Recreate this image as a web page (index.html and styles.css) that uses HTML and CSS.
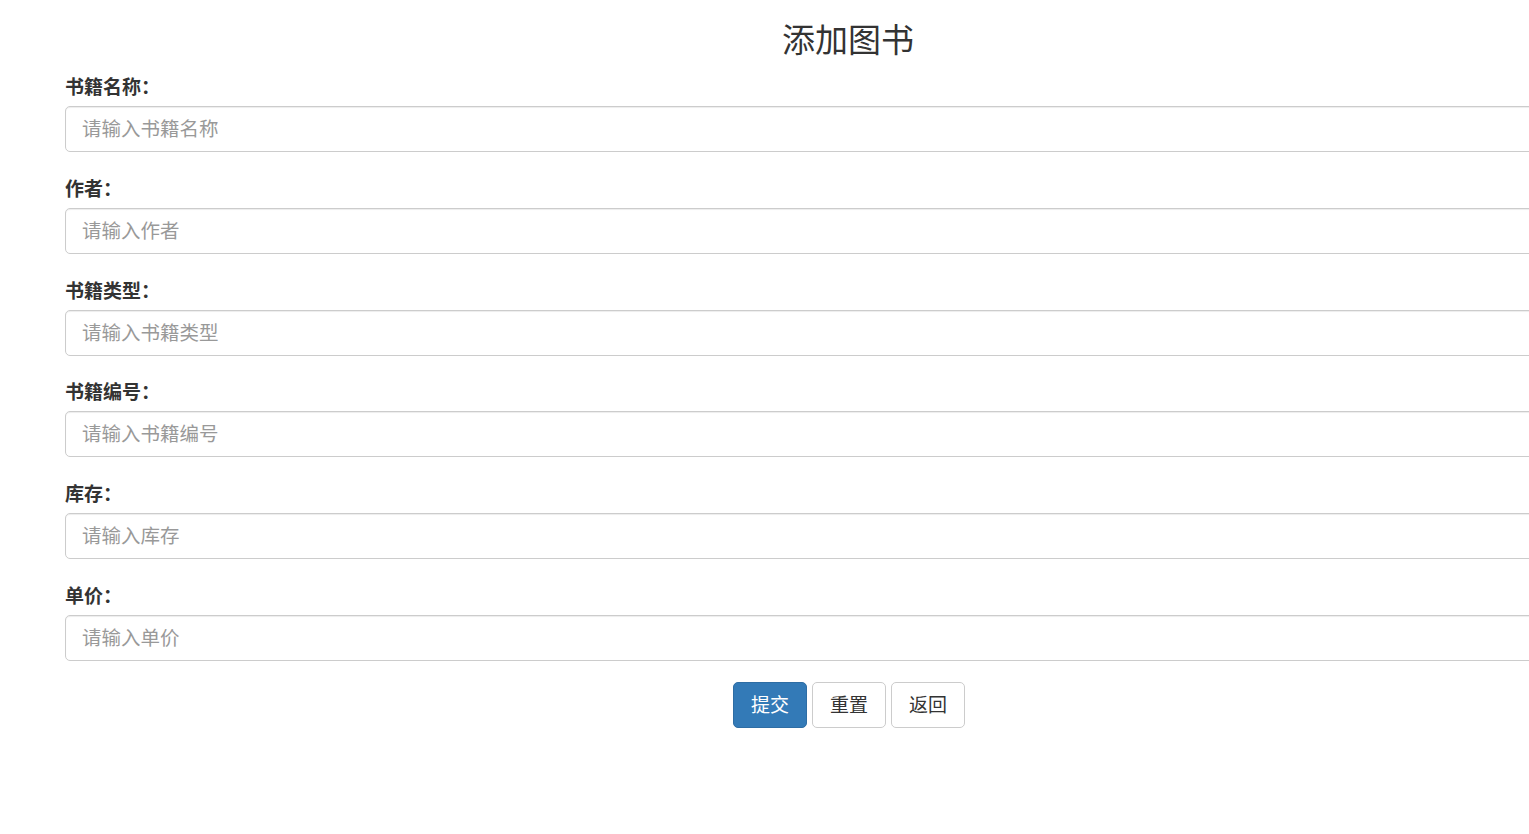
FILE: index.html
```html
<!DOCTYPE html>
<html lang="zh-CN">
<head>
    <meta charset="UTF-8">
    <meta name="viewport" content="width=device-width, initial-scale=1.0">
    <title>添加图书</title>
    <link rel="stylesheet" href="styles.css">
</head>
<body>
    <div class="container">
        <h1>添加图书</h1>

        <!-- 图书信息表单 -->
        <form id="bookForm">
            <div class="form-group">
                <label for="bookName">书籍名称：</label>
                <input type="text" id="bookName" name="bookName" class="form-control" placeholder="请输入书籍名称">
            </div>
            <div class="form-group">
                <label for="author">作者：</label>
                <input type="text" id="author" name="author" class="form-control" placeholder="请输入作者">
            </div>
            <div class="form-group">
                <label for="bookType">书籍类型：</label>
                <input type="text" id="bookType" name="bookType" class="form-control" placeholder="请输入书籍类型">
            </div>
            <div class="form-group">
                <label for="bookNo">书籍编号：</label>
                <input type="text" id="bookNo" name="bookNo" class="form-control" placeholder="请输入书籍编号">
            </div>
            <div class="form-group">
                <label for="stock">库存：</label>
                <input type="text" id="stock" name="stock" class="form-control" placeholder="请输入库存">
            </div>
            <div class="form-group">
                <label for="price">单价：</label>
                <input type="text" id="price" name="price" class="form-control" placeholder="请输入单价">
            </div>

            <div class="actions">
                <button type="submit" class="btn btn-primary">提交</button>
                <button type="reset" class="btn">重置</button>
                <button type="button" class="btn" onclick="history.back()">返回</button>
            </div>
        </form>
    </div>
</body>
</html>
```

FILE: styles.css
```css
* {
    margin: 0;
    padding: 0;
    box-sizing: border-box;
}

body {
    font-family: "Microsoft YaHei", "Noto Sans CJK SC", "Liberation Sans", sans-serif;
    background-color: #fff;
    color: #333;
}

.container {
    width: 1566px;
    margin-left: 65px;
}

h1 {
    font-size: 33px;
    font-weight: 400;
    line-height: 40px;
    text-align: center;
    padding-top: 18px;
    margin-bottom: 15px;
}

.form-group {
    margin-bottom: 22.8px;
}

label {
    display: block;
    font-size: 19px;
    font-weight: bold;
    line-height: 25px;
    margin-bottom: 8px;
}

.form-control {
    display: block;
    width: 100%;
    height: 46px;
    padding: 8px 16px 11px;
    font-family: inherit;
    font-size: 19.5px;
    color: #555;
    background-color: #fff;
    border: 1px solid #ccc;
    border-radius: 5px;
    box-shadow: inset 0 1px 1px rgba(0, 0, 0, 0.075);
    outline: none;
}

.form-control::placeholder {
    color: #999;
}

.form-control:focus {
    border-color: #66afe9;
    box-shadow: inset 0 1px 1px rgba(0, 0, 0, 0.075), 0 0 8px rgba(102, 175, 233, 0.6);
}

.actions {
    display: flex;
    justify-content: center;
    gap: 5px;
    margin-top: -2px;
    padding-left: 2px;
}

.btn {
    width: 74px;
    height: 46px;
    padding-bottom: 2px;
    font-family: inherit;
    font-size: 19px;
    color: #333;
    background-color: #fff;
    border: 1px solid #ccc;
    border-radius: 5px;
    cursor: pointer;
}

.btn:hover {
    background-color: #e6e6e6;
}

.btn-primary {
    color: #fff;
    background-color: #337ab7;
    border-color: #2e6da4;
}

.btn-primary:hover {
    background-color: #286090;
}
```
